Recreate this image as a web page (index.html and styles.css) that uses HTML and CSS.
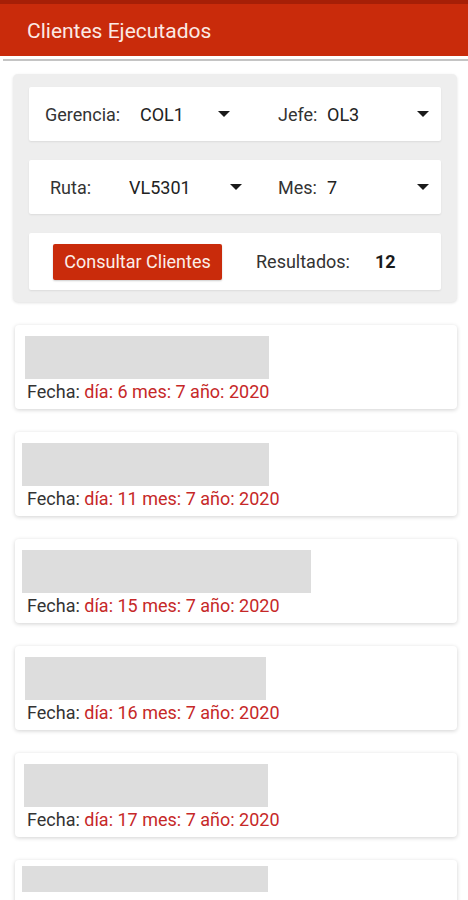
FILE: index.html
```html
<!DOCTYPE html>
<html lang="es">
<head>
    <meta charset="UTF-8">
    <meta name="viewport" content="width=device-width, initial-scale=1.0">
    <title>Clientes Ejecutados</title>
    <link rel="stylesheet" href="styles.css">
</head>
<body>
    <header class="app-bar">
        <h1>Clientes Ejecutados</h1>
    </header>
    <div class="bar-line"></div>

    <main>
        <section class="filters">
            <div class="filter-row">
                <div class="field field-gerencia">
                    <span class="label">Gerencia:</span>
                    <span class="value">COL1</span>
                    <svg class="caret" viewBox="0 0 12 6"><path d="M0 0h12L6 6z"/></svg>
                </div>
                <div class="field field-jefe">
                    <span class="label">Jefe:</span>
                    <span class="value">OL3</span>
                    <svg class="caret" viewBox="0 0 12 6"><path d="M0 0h12L6 6z"/></svg>
                </div>
            </div>
            <div class="filter-row">
                <div class="field field-ruta">
                    <span class="label">Ruta:</span>
                    <span class="value">VL5301</span>
                    <svg class="caret" viewBox="0 0 12 6"><path d="M0 0h12L6 6z"/></svg>
                </div>
                <div class="field field-mes">
                    <span class="label">Mes:</span>
                    <span class="value">7</span>
                    <svg class="caret" viewBox="0 0 12 6"><path d="M0 0h12L6 6z"/></svg>
                </div>
            </div>
            <div class="filter-row action-row">
                <button class="btn-consultar">Consultar Clientes</button>
                <span class="results-label">Resultados:</span>
                <span class="results-count">12</span>
            </div>
        </section>

        <div class="client-list">
            <div class="client">
                <div class="redacted" style="width: 244px; margin-left: 0;"></div>
                <p class="fecha">Fecha: <span>día: 6 mes: 7 año: 2020</span></p>
            </div>
            <div class="client">
                <div class="redacted" style="width: 247px; margin-left: -3px;"></div>
                <p class="fecha">Fecha: <span>día: 11 mes: 7 año: 2020</span></p>
            </div>
            <div class="client">
                <div class="redacted" style="width: 289px; margin-left: -3px;"></div>
                <p class="fecha">Fecha: <span>día: 15 mes: 7 año: 2020</span></p>
            </div>
            <div class="client">
                <div class="redacted" style="width: 241px; margin-left: 0;"></div>
                <p class="fecha">Fecha: <span>día: 16 mes: 7 año: 2020</span></p>
            </div>
            <div class="client">
                <div class="redacted" style="width: 244px; margin-left: -1px;"></div>
                <p class="fecha">Fecha: <span>día: 17 mes: 7 año: 2020</span></p>
            </div>
            <div class="client client-partial">
                <div class="redacted" style="width: 246px; margin-left: -3px;"></div>
            </div>
        </div>
    </main>
</body>
</html>
```
FILE: styles.css
```css
body {
    margin: 0;
    padding: 0;
    font-family: Roboto, "Noto Sans", sans-serif;
    background-color: #ffffff;
    color: #2b2b2b;
    overflow: hidden;
    height: 900px;
}

.app-bar {
    height: 52px;
    border-top: 4px solid #a61f07;
    background-color: #c92b0b;
    display: flex;
    align-items: center;
    padding-left: 27px;
    padding-top: 2px;
    box-sizing: border-box;
    height: 56px;
}

.app-bar h1 {
    margin: 0;
    font-size: 21px;
    font-weight: 400;
    color: #fbe9e4;
}

.bar-line {
    height: 2px;
    margin: 3px 0 0 3px;
    background-color: #c4c4c4;
}

main {
    padding: 13px 11px 0 13px;
}

.filters {
    background-color: #eeeeee;
    border-radius: 5px;
    padding: 13px 16px 12px 16px;
    display: flex;
    flex-direction: column;
    gap: 19px;
    box-shadow: 0 1px 3px rgba(0, 0, 0, 0.12);
}

.filter-row {
    height: 54px;
    background-color: #ffffff;
    border-radius: 2px;
    display: flex;
    align-items: center;
    box-shadow: 0 1px 2px rgba(0, 0, 0, 0.08);
    font-size: 18px;
}

.field {
    display: flex;
    align-items: center;
    height: 100%;
    box-sizing: border-box;
}

.field .label {
    color: #333333;
}

.field .value {
    flex: 1;
    color: #222222;
}

.caret {
    width: 12px;
    height: 6px;
    fill: #1a1a1a;
}

.field-gerencia {
    width: 217px;
    padding: 0 16px;
}

.field-gerencia .label {
    width: 95px;
}

.field-jefe {
    flex: 1;
    padding: 0 12px 0 32px;
}

.field-jefe .label,
.field-mes .label {
    width: 49px;
}

.field-ruta {
    width: 229px;
    padding: 0 16px 0 21px;
}

.field-ruta .label {
    width: 79px;
}

.field-mes {
    flex: 1;
    padding: 0 12px 0 20px;
}

.action-row {
    height: 57px;
    padding-left: 24px;
}

.btn-consultar {
    height: 36px;
    width: 169px;
    border: none;
    border-radius: 2px;
    background-color: #c92b0b;
    color: #fbeee9;
    font-family: inherit;
    font-size: 18px;
    padding: 0;
    box-shadow: 0 1px 2px rgba(0, 0, 0, 0.2);
}

.results-label {
    margin-left: 34px;
    color: #333333;
}

.results-count {
    margin-left: 25px;
    font-weight: 700;
    color: #1a1a1a;
}

.client-list {
    display: flex;
    flex-direction: column;
    gap: 23px;
    padding: 23px 0 0 2px;
}

.client {
    height: 84px;
    box-sizing: border-box;
    padding: 11px 10px 0 10px;
    background-color: #ffffff;
    border-radius: 4px;
    box-shadow: 0 1px 4px rgba(0, 0, 0, 0.18);
}

.client-partial {
    padding-top: 6px;
}

.client-partial .redacted {
    height: 26px;
}

.redacted {
    height: 43px;
    background-color: #dddddd;
}

.fecha {
    margin: 2px 0 0 2px;
    font-size: 18px;
    color: #333333;
}

.fecha span {
    color: #c62828;
}
```
